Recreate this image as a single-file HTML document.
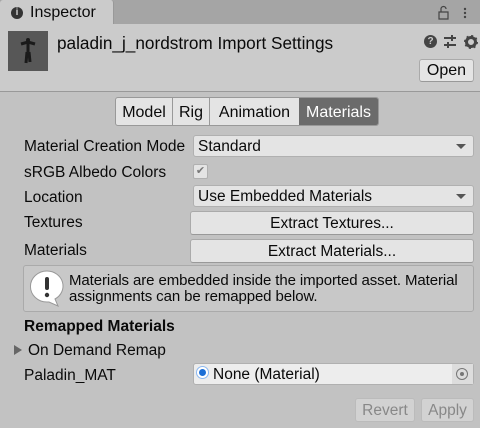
<!DOCTYPE html>
<html><head><style>
*{box-sizing:border-box;margin:0;padding:0}
body{width:480px;height:428px;background:#c2c2c2;font-family:"Liberation Sans",sans-serif;font-size:15.5px;color:#0a0a0a;position:relative;overflow:hidden}
.a{position:absolute}
.field{position:absolute;background:#e4e4e4;border:1px solid #b0b0b0;border-radius:3px;padding-left:4px;line-height:21px;height:22px}
.btn{position:absolute;background:#e4e4e4;border:1px solid #aaa;border-bottom-color:#999;border-radius:3px;text-align:center;line-height:23px}
.dd:after{content:"";position:absolute;right:7px;top:8px;border-left:5px solid transparent;border-right:5px solid transparent;border-top:5px solid #555}
.lbl{position:absolute;left:24px;line-height:18px}
</style></head><body>
<div class="a" style="left:0;top:0;width:480px;height:24px;background:#a5a5a5"></div>
<div class="a" style="left:0;top:0;width:114px;height:25px;background:#cbcbcb;border-radius:3px 3px 0 0;border-right:1px solid #999"></div>
<div class="a" style="left:11px;top:7px;width:12px;height:12px;border-radius:50%;background:#333;color:#cbcbcb;font-size:10px;font-weight:bold;text-align:center;line-height:12px">i</div>
<div class="a" style="left:30px;top:4px;font-size:16px">Inspector</div>
<svg class="a" style="left:436px;top:3px" width="40" height="18"><path d="M3 9h9v7H3z M5 9V6a2.5 2.5 0 0 1 5 0" fill="none" stroke="#444" stroke-width="1.2"/><circle cx="29" cy="6" r="1.2" fill="#444"/><circle cx="29" cy="10" r="1.2" fill="#444"/><circle cx="29" cy="14" r="1.2" fill="#444"/></svg>
<div class="a" style="left:0;top:24px;width:480px;height:68px;background:#cbcbcb;border-bottom:1px solid #999"></div>
<div class="a" style="left:8px;top:31px;width:40px;height:40px;background:#575757"></div>
<svg class="a" style="left:8px;top:31px" width="40" height="40"><path d="M13 13l7-2 7 2M20 11v10M19 21l-1 11M21 21l1 10" stroke="#1a1a1a" stroke-width="3" fill="none"/><circle cx="20" cy="9" r="2" fill="#1a1a1a"/></svg>
<div class="a" style="left:57px;top:33px;font-size:17.2px">paladin_j_nordstrom Import Settings</div>
<div class="a" style="left:424px;top:35px;width:13px;height:13px;border-radius:50%;background:#444;color:#cbcbcb;font-size:10px;font-weight:bold;text-align:center;line-height:13px">?</div>
<svg class="a" style="left:443px;top:34px" width="36" height="16"><path d="M1 4h12M1 11h12M9 1v6M5 8v6" stroke="#444" stroke-width="2"/><circle cx="28" cy="8" r="4.5" fill="none" stroke="#444" stroke-width="3"/><circle cx="28" cy="8" r="6" fill="none" stroke="#444" stroke-width="2" stroke-dasharray="2 2.7"/></svg>
<div class="btn" style="left:419px;top:59px;width:55px;height:23px;font-size:16px;line-height:22px">Open</div>
<div class="a" style="left:115px;top:97px;width:264px;height:29px;border:1px solid #999;border-radius:3px;background:#e4e4e4;display:flex;font-size:16px;line-height:29px;overflow:hidden">
<div style="width:57px;text-align:center;border-right:1px solid #999">Model</div>
<div style="width:37px;text-align:center;border-right:1px solid #999">Rig</div>
<div style="width:89px;text-align:center">Animation</div>
<div style="flex:1;text-align:center;background:#6b6b6b;color:#fff">Materials</div>
</div>
<div class="lbl" style="top:138px">Material Creation Mode</div>
<div class="field dd" style="left:193px;top:135px;width:281px">Standard</div>
<div class="lbl" style="top:164px">sRGB Albedo Colors</div>
<div class="a" style="left:193px;top:164px;width:15px;height:15px;background:#e4e4e4;border:1px solid #b0b0b0;border-radius:2px;font-size:11px;color:#777;text-align:center;line-height:13px">✔</div>
<div class="lbl" style="top:189px">Location</div>
<div class="field dd" style="left:193px;top:185px;width:281px">Use Embedded Materials</div>
<div class="lbl" style="top:214px">Textures</div>
<div class="btn" style="left:190px;top:211px;width:284px;height:24px">Extract Textures...</div>
<div class="lbl" style="top:242px">Materials</div>
<div class="btn" style="left:190px;top:239px;width:284px;height:24px">Extract Materials...</div>
<div class="a" style="left:23px;top:265px;width:451px;height:47px;border:1px solid #aaa;border-radius:3px;background:#c8c8c8"></div>
<svg class="a" style="left:28px;top:268px" width="38" height="40"><path d="M19 3a16 15 0 1 0 0 31h2l9 4-3-7a16 15 0 0 0-8-28z" fill="#fff" stroke="#999"/><rect x="17" y="9" width="4" height="13" rx="2" fill="#333"/><circle cx="19" cy="27" r="2.2" fill="#333"/></svg>
<div class="a" style="left:69px;top:273px;font-size:15px;line-height:16px;letter-spacing:-0.1px">Materials are embedded inside the imported asset. Material<br>assignments can be remapped below.</div>
<div class="a" style="left:24px;top:318px;font-weight:bold">Remapped Materials</div>
<div class="a" style="left:14px;top:345px;border-top:5px solid transparent;border-bottom:5px solid transparent;border-left:8px solid #666"></div>
<div class="a" style="left:28px;top:342px">On Demand Remap</div>
<div class="lbl" style="top:367px">Paladin_MAT</div>
<div class="field" style="left:193px;top:363px;width:281px;background:#ededed;padding-left:19px">None (Material)</div>
<div class="a" style="left:197px;top:367px;width:11px;height:11px;border-radius:50%;background:#1c6fd6;border:2px solid #fff;box-shadow:0 0 0 1px #8cb8f0"></div>
<div class="a" style="left:452px;top:364px;width:21px;height:20px;background:#ddd"></div>
<div class="a" style="left:456px;top:368px;width:12px;height:12px;border-radius:50%;border:1.5px solid #777"><div style="margin:2.5px;width:4px;height:4px;border-radius:50%;background:#777"></div></div>
<div class="btn" style="left:355px;top:398px;width:60px;height:24px;color:#888;background:#d2d2d2;border-color:#bbb">Revert</div>
<div class="btn" style="left:421px;top:398px;width:53px;height:24px;color:#888;background:#d2d2d2;border-color:#bbb">Apply</div>
</body></html>
